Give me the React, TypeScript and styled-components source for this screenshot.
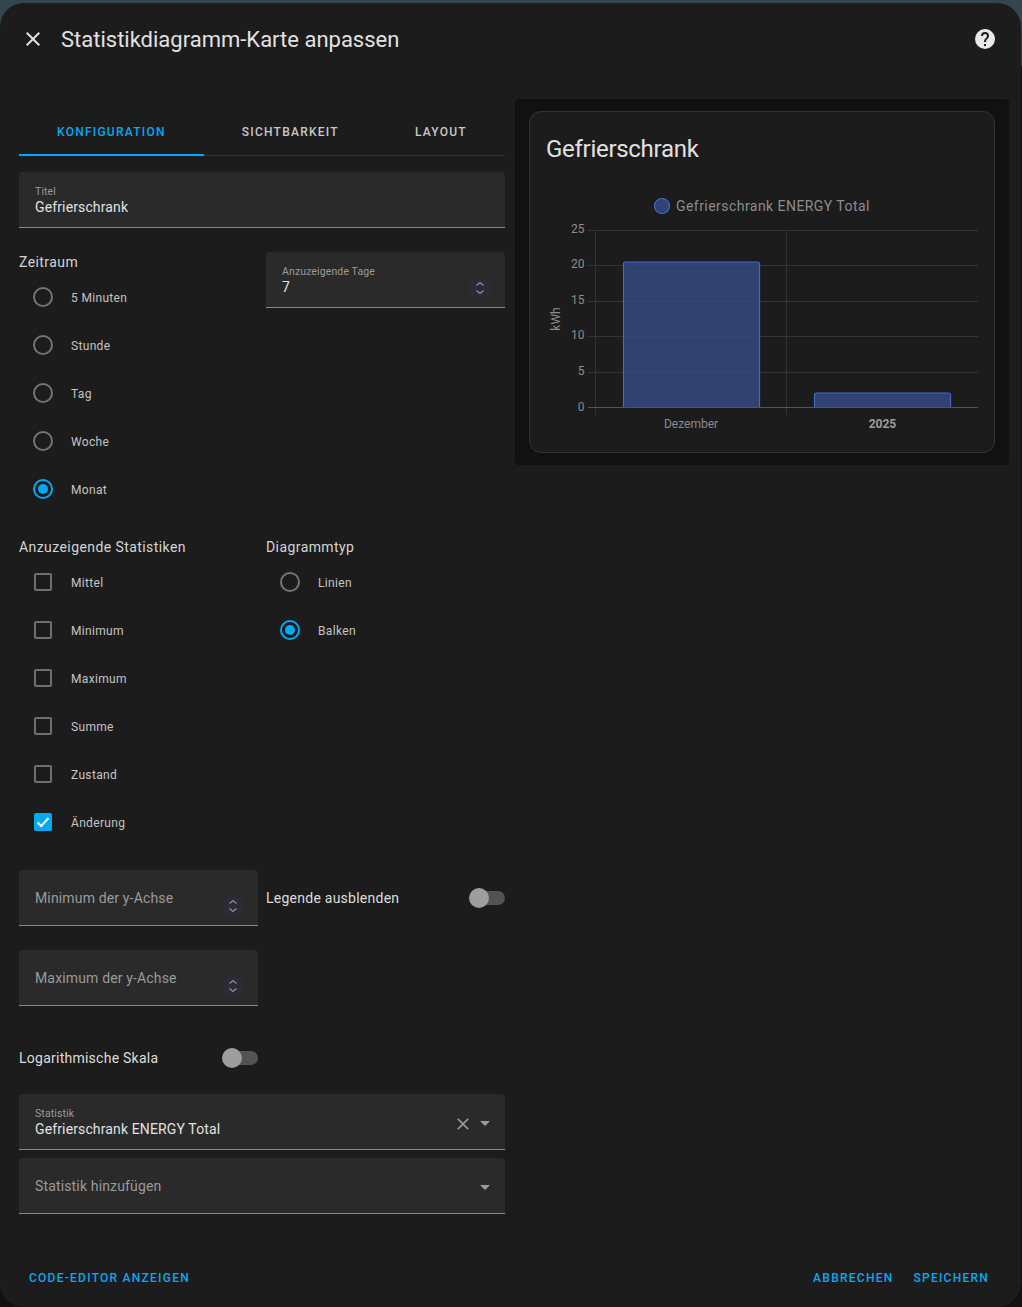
import styled, { createGlobalStyle } from 'styled-components';

const blue = '#03a9f4';
const closePath =
  'M19,6.41L17.59,5L12,10.59L6.41,5L5,6.41L10.59,12L5,17.59L6.41,19L12,13.41L17.59,19L19,17.59L13.41,12L19,6.41Z';
const helpPath =
  'M15.07,11.25L14.17,12.17C13.45,12.89 13,13.5 13,15H11V14.5C11,13.39 11.45,12.39 12.17,11.67L13.41,10.41C13.78,10.05 14,9.55 14,9C14,7.89 13.1,7 12,7A2,2 0 0,0 10,9H8A4,4 0 0,1 12,5A4,4 0 0,1 16,9C16,9.88 15.64,10.67 15.07,11.25M13,19H11V17H13M12,2A10,10 0 0,0 2,12A10,10 0 0,0 12,22A10,10 0 0,0 22,12C22,6.47 17.5,2 12,2Z';

const periods = ['5 Minuten', 'Stunde', 'Tag', 'Woche', 'Monat'];
const stats = ['Mittel', 'Minimum', 'Maximum', 'Summe', 'Zustand', 'Änderung'];
const types = ['Linien', 'Balken'];
const yTicks = [
  { label: '25', y: 230.5 },
  { label: '20', y: 265.5 },
  { label: '15', y: 301.5 },
  { label: '10', y: 336.5 },
  { label: '5', y: 372.5 },
];

const Global = createGlobalStyle`
  html, body { margin: 0; padding: 0; }
  body {
    background: #111111;
    font-family: Roboto, "Liberation Sans", sans-serif;
  }
`;

const Backdrop = styled.div`
  width: 1022px;
  height: 1307px;
  padding-top: 3px;
  box-sizing: border-box;
  background: linear-gradient(#33454d 0 66px, #111111 66px);
`;

const Dialog = styled.div`
  width: 1021px;
  height: 1304px;
  background: #1c1c1c;
  border-radius: 24px;
  display: flex;
  flex-direction: column;
  color: #e1e1e1;
`;

const Header = styled.header`
  height: 72px;
  flex: none;
  display: flex;
  align-items: center;
  padding: 0 24px 0 21px;
`;

const IconSlot = styled.svg<{ $size: number; $color?: string }>`
  width: ${({ $size }) => $size}px;
  height: ${({ $size }) => $size}px;
  fill: ${({ $color }) => $color || 'currentColor'};
  flex: none;
  display: block;
`;

const CaretIcon = styled(IconSlot)`
  transform: translateY(-1px);
`;

const Title = styled.h1`
  flex: 1;
  margin: 2px 0 0 16px;
  font-size: 22px;
  font-weight: 400;
  line-height: 28px;
  letter-spacing: 0;
  color: #e1e1e1;
`;

const Body = styled.div`
  flex: 1;
  display: flex;
  align-items: flex-start;
  padding: 24px 12px 0 19px;
`;

const EditorColumn = styled.div`
  width: 486px;
  flex: none;
  padding-top: 9px;
`;

const Tabs = styled.div`
  display: flex;
  height: 47px;
  border-bottom: 1px solid #333333;
  margin-bottom: 16px;
`;

const Tab = styled.div<{ $active?: boolean }>`
  padding: 2px 38px 0;
  display: flex;
  align-items: center;
  box-sizing: border-box;
  height: 48px;
  font-size: 12px;
  font-weight: 500;
  letter-spacing: 1.25px;
  color: ${({ $active }) => ($active ? blue : '#c8c8c8')};
  border-bottom: 2px solid ${({ $active }) => ($active ? blue : 'transparent')};
`;

const Field = styled.div`
  height: 56px;
  box-sizing: border-box;
  background: #2a2a2a;
  border-radius: 4px 4px 0 0;
  border-bottom: 1px solid #8a8a8a;
  padding: 0 16px;
  display: flex;
  align-items: flex-start;
`;

const FieldText = styled.div`
  flex: 1;
  min-width: 0;
  display: flex;
  flex-direction: column;
`;

const FloatLabel = styled.span`
  font-size: 10.5px;
  line-height: 12px;
  margin-top: 14px;
  letter-spacing: 0.12px;
  color: #9a9a9a;
`;

const Value = styled.span`
  font-size: 14px;
  line-height: 20px;
  margin-top: -1px;
  letter-spacing: 0.13px;
  color: #e1e1e1;
`;

const Placeholder = styled.span`
  font-size: 14px;
  line-height: 20px;
  margin-top: 18px;
  letter-spacing: 0.15px;
  color: #9a9a9a;
`;

const Spinner = styled.div`
  width: 18px;
  height: 18px;
  margin-top: 27px;
  flex: none;
  background: #2d2b38;
  border-radius: 2px;
`;

const SelectIcons = styled.div`
  display: flex;
  align-items: center;
  margin-top: 18px;
  margin-right: -8px;
`;

const FormGrid = styled.div`
  display: grid;
  grid-template-columns: 239px 239px;
  column-gap: 8px;
  row-gap: 24px;
  margin-top: 24px;
`;

const Group = styled.div``;

const GroupLabel = styled.div`
  font-size: 14px;
  line-height: 21px;
  letter-spacing: 0.42px;
  color: #d4d4d4;
`;

const OptionRow = styled.div`
  height: 48px;
  display: flex;
  align-items: center;
  padding-left: 14px;
  font-size: 12px;
  letter-spacing: 0.33px;
  color: #c4c4c4;
`;

const OptionLabel = styled.span`
  margin: 2px 0 0 18px;
`;

const Radio = styled.span<{ $on?: boolean }>`
  width: 20px;
  height: 20px;
  box-sizing: border-box;
  border-radius: 50%;
  border: 2px solid ${({ $on }) => ($on ? blue : '#757575')};
  flex: none;
  display: flex;
  align-items: center;
  justify-content: center;
  &::after {
    content: '';
    width: 10px;
    height: 10px;
    border-radius: 50%;
    background: ${({ $on }) => ($on ? blue : 'transparent')};
  }
`;

const CheckBox = styled.span<{ $on?: boolean }>`
  width: 18px;
  height: 18px;
  margin: 0 1px;
  box-sizing: border-box;
  border-radius: 2px;
  border: 2px solid ${({ $on }) => ($on ? blue : '#6f6f6f')};
  background: ${({ $on }) => ($on ? blue : 'transparent')};
  flex: none;
  display: flex;
  align-items: center;
  justify-content: center;
`;

const SwitchRow = styled.div`
  display: flex;
  align-items: center;
  justify-content: space-between;
  font-size: 14px;
  letter-spacing: 0.25px;
  color: #dcdcdc;
  min-height: 56px;
`;

const SwitchTrack = styled.span`
  position: relative;
  width: 34px;
  height: 14px;
  margin-left: 2px;
  border-radius: 7px;
  background: #535353;
  flex: none;
  &::after {
    content: '';
    position: absolute;
    left: -2px;
    top: -3px;
    width: 20px;
    height: 20px;
    border-radius: 50%;
    background: #9e9e9e;
  }
`;

const SelectStack = styled.div`
  display: flex;
  flex-direction: column;
  gap: 8px;
  margin-top: 8px;
`;

const PreviewPanel = styled.div`
  margin-left: 10px;
  width: 494px;
  flex: none;
  box-sizing: border-box;
  padding: 12px 14px;
  background: #111111;
  border-radius: 4px;
`;

const Card = styled.div`
  height: 342px;
  box-sizing: border-box;
  background: #1c1c1c;
  border: 1px solid #333333;
  border-radius: 12px;
  display: flex;
  flex-direction: column;
`;

const CardTitle = styled.div`
  font-size: 24px;
  line-height: 32px;
  letter-spacing: -0.012em;
  padding: 21px 16px 0;
  color: #e1e1e1;
`;

const ChartFrame = styled.svg`
  width: 464px;
  height: 260px;
  display: block;
  margin-top: 25px;
  font-family: Roboto, "Liberation Sans", sans-serif;
`;

const Footer = styled.footer`
  flex: none;
  height: 37px;
  display: flex;
  align-items: flex-start;
  justify-content: space-between;
  padding: 0 32px 0 29px;
`;

const FooterGroup = styled.div`
  display: flex;
  gap: 20px;
`;

const TextButton = styled.span`
  font-size: 12px;
  font-weight: 500;
  line-height: 16px;
  letter-spacing: 1.25px;
  color: ${blue};
`;

const Chevrons = () => (
  <svg width="18" height="18" viewBox="0 0 18 18" fill="none" stroke="#8f8f8f" strokeWidth="1.2">
    <path d="M5.5 6.5 9 3.5l3.5 3M5.5 11.5 9 14.5l3.5-3" />
  </svg>
);

const Caret = () => (
  <CaretIcon $size={24} $color="#9a9a9a" viewBox="0 0 24 24">
    <path d="M7,10L12,15L17,10H7Z" />
  </CaretIcon>
);

const Chart = () => (
  // viewBox uses page coordinates, so ticks read the same as the screenshot
  <ChartFrame viewBox="530 190 464 260">
    <circle cx="662" cy="206" r="7.5" fill="#2f4272" stroke="#4068d0" strokeWidth="1.2" />
    <text x="676" y="211" fontSize="14" letterSpacing="0.45" fill="#8c8c8c">
      Gefrierschrank ENERGY Total
    </text>
    {yTicks.map((t) => (
      <g key={t.label}>
        <line x1="588" x2="978" y1={t.y} y2={t.y} stroke="#333333" />
        <text x="584.5" y={t.y + 2.5} fontSize="12" textAnchor="end" fill="#8c8c8c">
          {t.label}
        </text>
      </g>
    ))}
    <line x1="595.5" x2="595.5" y1="230" y2="415" stroke="#333333" />
    <line x1="786.5" x2="786.5" y1="230" y2="415" stroke="#333333" />
    <path
      d="M623.5 407.5V264a2 2 0 0 1 2-2H757.5a2 2 0 0 1 2 2V407.5"
      fill="#344c88"
      fillOpacity="0.8"
      stroke="#4068d0"
      strokeWidth="1.2"
    />
    <path
      d="M814.5 407.5V395a2 2 0 0 1 2-2H948.5a2 2 0 0 1 2 2V407.5"
      fill="#344c88"
      fillOpacity="0.8"
      stroke="#4068d0"
      strokeWidth="1.2"
    />
    <line x1="588" x2="978" y1="407.5" y2="407.5" stroke="#555555" />
    <text x="584.5" y="411" fontSize="12" textAnchor="end" fill="#8c8c8c">
      0
    </text>
    <text x="691" y="428" fontSize="12" textAnchor="middle" fill="#8c8c8c">
      Dezember
    </text>
    <text x="882.5" y="428" fontSize="12" fontWeight="700" textAnchor="middle" fill="#9c9c9c">
      2025
    </text>
    <text
      x="555.5"
      y="319"
      fontSize="12"
      textAnchor="middle"
      fill="#8c8c8c"
      transform="rotate(-90 555.5 319)"
      dy="4"
    >
      kWh
    </text>
  </ChartFrame>
);

export default function App() {
  return (
    <Backdrop>
      <Global />
      <Dialog>
        <Header>
          <IconSlot $size={24} viewBox="0 0 24 24">
            <path d={closePath} />
          </IconSlot>
          <Title>Statistikdiagramm-Karte anpassen</Title>
          <IconSlot $size={24} $color="#e8e8e8" viewBox="0 0 24 24">
            <path d={helpPath} />
          </IconSlot>
        </Header>
        <Body>
          <EditorColumn>
            <Tabs>
              <Tab $active>KONFIGURATION</Tab>
              <Tab>SICHTBARKEIT</Tab>
              <Tab>LAYOUT</Tab>
            </Tabs>
            <Field>
              <FieldText>
                <FloatLabel>Titel</FloatLabel>
                <Value>Gefrierschrank</Value>
              </FieldText>
            </Field>
            <FormGrid>
              <Group>
                <GroupLabel>Zeitraum</GroupLabel>
                {periods.map((p) => (
                  <OptionRow key={p}>
                    <Radio $on={p === 'Monat'} />
                    <OptionLabel>{p}</OptionLabel>
                  </OptionRow>
                ))}
              </Group>
              <Group>
                <Field>
                  <FieldText>
                    <FloatLabel>Anzuzeigende Tage</FloatLabel>
                    <Value>7</Value>
                  </FieldText>
                  <Spinner>
                    <Chevrons />
                  </Spinner>
                </Field>
              </Group>
              <Group>
                <GroupLabel>Anzuzeigende Statistiken</GroupLabel>
                {stats.map((s) => (
                  <OptionRow key={s}>
                    <CheckBox $on={s === 'Änderung'}>
                      {s === 'Änderung' && (
                        <svg width="14" height="14" viewBox="0 0 14 14" fill="none" stroke="#fff" strokeWidth="2">
                          <path d="M1.5 7.5 5.2 11 12.5 3" />
                        </svg>
                      )}
                    </CheckBox>
                    <OptionLabel>{s}</OptionLabel>
                  </OptionRow>
                ))}
              </Group>
              <Group>
                <GroupLabel>Diagrammtyp</GroupLabel>
                {types.map((t) => (
                  <OptionRow key={t}>
                    <Radio $on={t === 'Balken'} />
                    <OptionLabel>{t}</OptionLabel>
                  </OptionRow>
                ))}
              </Group>
              <Field>
                <FieldText>
                  <Placeholder>Minimum der y-Achse</Placeholder>
                </FieldText>
                <Spinner>
                  <Chevrons />
                </Spinner>
              </Field>
              <SwitchRow>
                Legende ausblenden
                <SwitchTrack />
              </SwitchRow>
              <Field>
                <FieldText>
                  <Placeholder>Maximum der y-Achse</Placeholder>
                </FieldText>
                <Spinner>
                  <Chevrons />
                </Spinner>
              </Field>
              <div />
              <SwitchRow>
                Logarithmische Skala
                <SwitchTrack />
              </SwitchRow>
            </FormGrid>
            <SelectStack>
              <Field>
                <FieldText>
                  <FloatLabel>Statistik</FloatLabel>
                  <Value>Gefrierschrank ENERGY Total</Value>
                </FieldText>
                <SelectIcons>
                  <IconSlot $size={20} $color="#9a9a9a" viewBox="0 0 24 24">
                    <path d={closePath} />
                  </IconSlot>
                  <Caret />
                </SelectIcons>
              </Field>
              <Field>
                <FieldText>
                  <Placeholder>Statistik hinzufügen</Placeholder>
                </FieldText>
                <SelectIcons>
                  <Caret />
                </SelectIcons>
              </Field>
            </SelectStack>
          </EditorColumn>
          <PreviewPanel>
            <Card>
              <CardTitle>Gefrierschrank</CardTitle>
              <Chart />
            </Card>
          </PreviewPanel>
        </Body>
        <Footer>
          <TextButton>CODE-EDITOR ANZEIGEN</TextButton>
          <FooterGroup>
            <TextButton>ABBRECHEN</TextButton>
            <TextButton>SPEICHERN</TextButton>
          </FooterGroup>
        </Footer>
      </Dialog>
    </Backdrop>
  );
}
